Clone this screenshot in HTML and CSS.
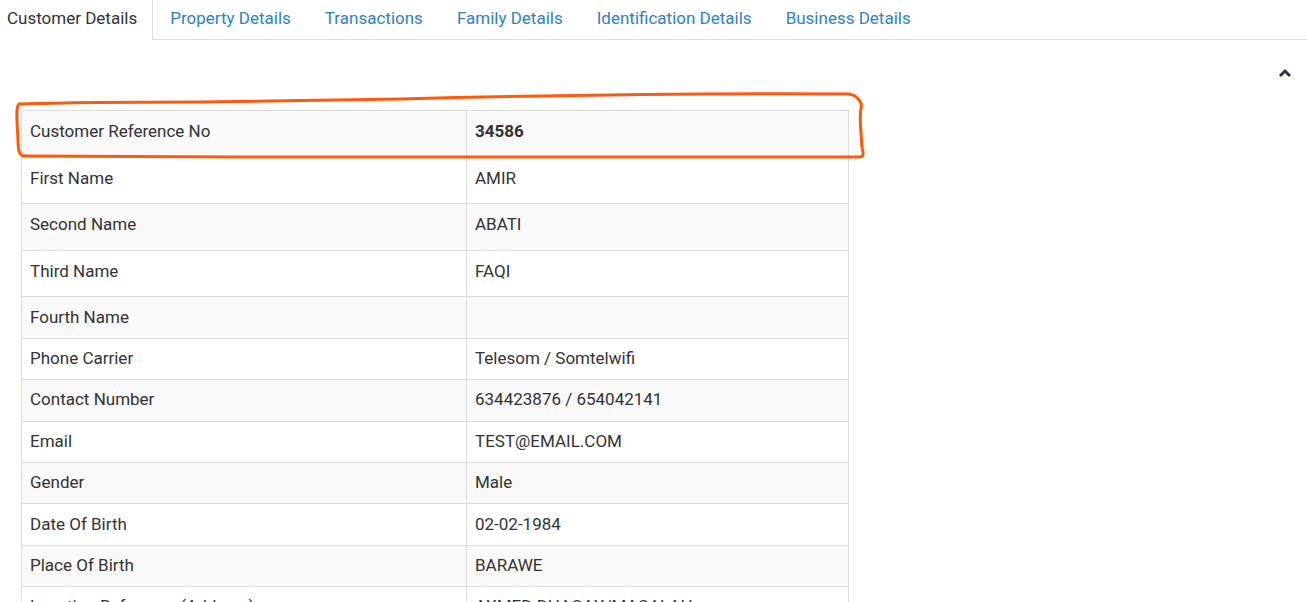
FILE: index.html
```html
<!DOCTYPE html>
<html lang="en">
<head>
    <meta charset="UTF-8">
    <title>Customer Details</title>
    <link rel="stylesheet" href="styles.css">
</head>
<body>
    <ul class="tabs">
        <li class="tab active">Customer Details</li>
        <li class="tab">Property Details</li>
        <li class="tab">Transactions</li>
        <li class="tab">Family Details</li>
        <li class="tab">Identification Details</li>
        <li class="tab">Business Details</li>
    </ul>

    <div class="panel">
        <div class="panel-head">
            <svg class="collapse-icon" width="14" height="10" viewBox="0 0 14 10">
                <path d="M2 8 L7 3 L12 8" fill="none" stroke="#2b3442" stroke-width="3"/>
            </svg>
        </div>

        <table class="details">
            <tr class="tall"><td>Customer Reference No</td><td><b>34586</b></td></tr>
            <tr class="tall"><td>First Name</td><td>AMIR</td></tr>
            <tr class="tall"><td>Second Name</td><td>ABATI</td></tr>
            <tr class="tall"><td>Third Name</td><td>FAQI</td></tr>
            <tr><td>Fourth Name</td><td></td></tr>
            <tr><td>Phone Carrier</td><td>Telesom / Somtelwifi</td></tr>
            <tr><td>Contact Number</td><td>634423876 / 654042141</td></tr>
            <tr><td>Email</td><td>TEST@EMAIL.COM</td></tr>
            <tr><td>Gender</td><td>Male</td></tr>
            <tr><td>Date Of Birth</td><td>02-02-1984</td></tr>
            <tr><td>Place Of Birth</td><td>BARAWE</td></tr>
            <tr><td>Location Reference (Address)</td><td>AXMED DHAGAX/MAGALAH</td></tr>
        </table>

        <!-- hand-drawn highlight round the first row -->
        <svg class="marker" width="880" height="80" viewBox="0 0 880 80">
            <path d="M20 14 C14 12 16 30 17 50 C17 60 18 66 24 66 L240 67 C500 66 700 66 858 67 C864 67 862 62 861 58 C860 40 858 28 860 18 C862 12 855 5 848 4 C700 3 520 6 400 9 C300 11 240 12 200 12 C140 12 80 12 20 14 Z"
                  fill="none" stroke="#ff5a0a" stroke-width="3" stroke-linejoin="round"/>
        </svg>
    </div>
</body>
</html>
```

FILE: styles.css
```css
* {
    margin: 0;
    padding: 0;
    box-sizing: border-box;
}

body {
    font-family: Roboto, "Liberation Sans", Arial, sans-serif;
    font-size: 17px;
    color: #333333;
    background-color: #ffffff;
    overflow: hidden;
}

.tabs {
    display: flex;
    list-style: none;
    border-bottom: 1px solid #dddddd;
    height: 40px;
}

.tab {
    padding: 8px 17px 0;
    line-height: 20px;
    color: #2f7fc6;
}

.tab.active {
    color: #333333;
    padding-left: 7px;
    padding-right: 15px;
    background-color: #ffffff;
    border-right: 1px solid #dddddd;
    height: 40px;
}

.panel {
    position: relative;
    padding: 0 15px 0 21px;
}

.panel-head {
    display: flex;
    justify-content: flex-end;
    height: 70px;
    padding-top: 28px;
}

.details {
    width: 828px;
    border-collapse: collapse;
}

.details td {
    border: 1px solid #dddddd;
    padding: 0 8px 2px;
    height: 41.4px;
    line-height: 20px;
    vertical-align: middle;
}

.details tr.tall td {
    height: 46.6px;
    padding-bottom: 5px;
}

.details td:first-child {
    width: 445px;
}

.details tr:nth-child(odd) {
    background-color: #f9f9f9;
}

.marker {
    position: absolute;
    left: 1px;
    top: 50px;
}
```
